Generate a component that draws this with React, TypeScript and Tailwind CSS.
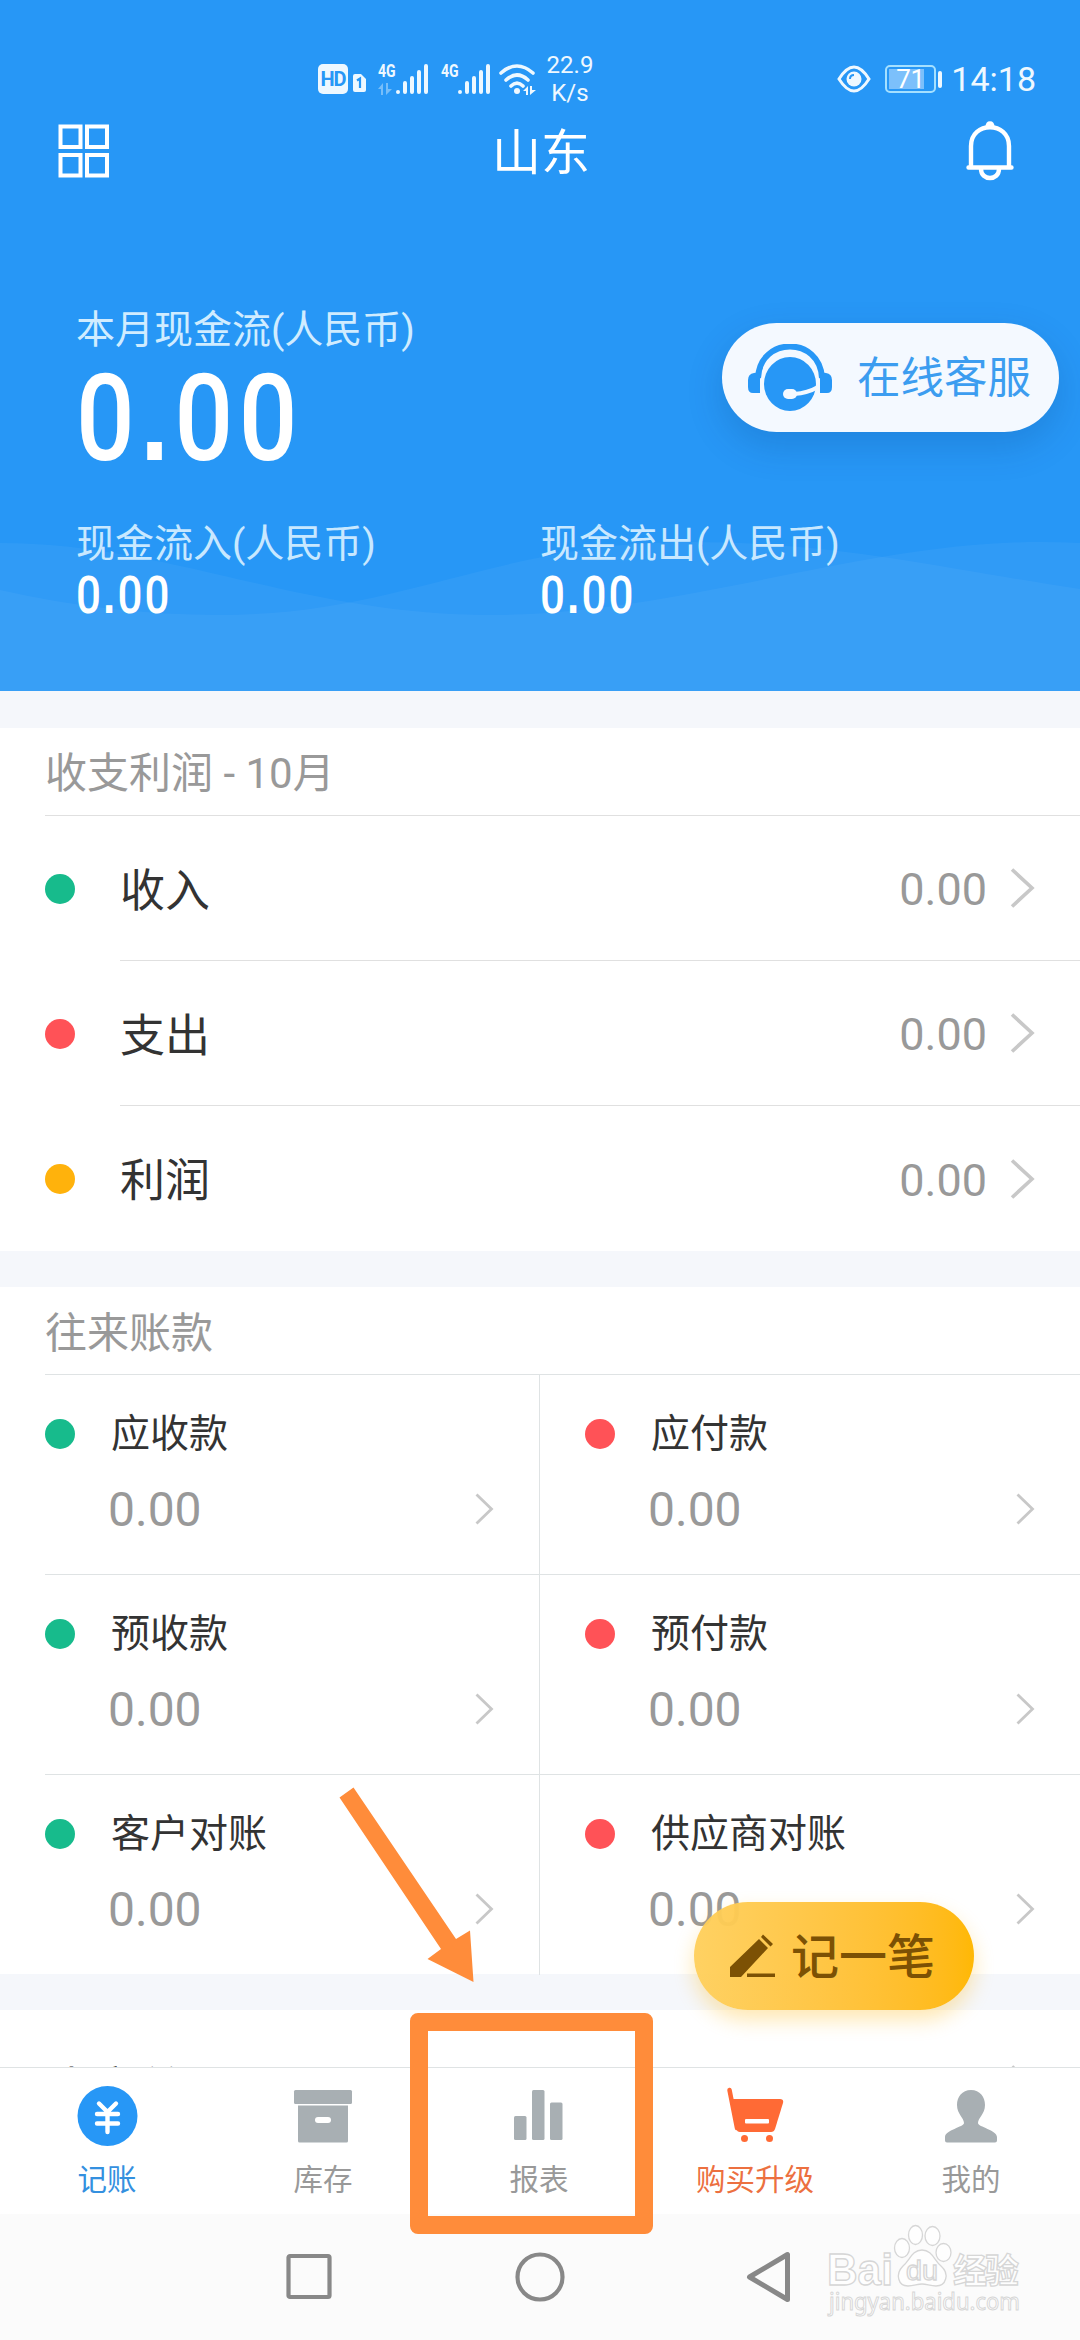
import React from 'react';

const summaryRows = [
  { label: '收入', value: '0.00', dot: 'bg-[#17bb8c]' },
  { label: '支出', value: '0.00', dot: 'bg-[#ff5257]' },
  { label: '利润', value: '0.00', dot: 'bg-[#ffb20c]' },
];

const accounts = [
  ['应收款', '应付款'],
  ['预收款', '预付款'],
  ['客户对账', '供应商对账'],
];

function Signal() {
  return (
    <svg className="w-[34px] h-[32px]" viewBox="0 0 34 32" stroke="#eef8ff" strokeWidth="4" strokeLinecap="round">
      <path d="M3 29V29.1M10 29V20M17 29V15M24 29V9M31 29V3" />
    </svg>
  );
}

function StatusBar() {
  return (
    <div className="mt-[50px] h-[58px] flex items-center pl-[318px] pr-[44px] text-[#eef8ff]">
      <div className="w-[30px] h-[30px] rounded-[5px] bg-[#eef8ff] text-[#2797f6] text-[20px] font-bold leading-[30px] text-center tracking-[-1px]">HD</div>
      <svg className="ml-[5px] mt-2 w-[13px] h-[18px]" viewBox="0 0 13 18">
        <path d="M0 2Q0 0 2 0H8L13 5V16Q13 18 11 18H2Q0 18 0 16Z" fill="#eef8ff" />
        <path d="M4 6.5L7 4.5V14" fill="none" stroke="#2797f6" strokeWidth="2.2" />
      </svg>
      <div className="ml-3 w-[17px] flex flex-col h-[32px]">
        <span className="text-[19px] leading-[16px] font-bold origin-left scale-x-[0.74]">4G</span>
        <svg className="mt-[4px] w-[15px] h-[12px] opacity-40" viewBox="0 0 15 12" fill="#eef8ff">
          <path d="M0 6L5 0V12H3V6ZM8 0V12L14 6H10V0Z" />
        </svg>
      </div>
      <Signal />
      <div className="ml-3 w-[16px] h-[32px]">
        <span className="block text-[19px] leading-[16px] font-bold origin-left scale-x-[0.74]">4G</span>
      </div>
      <Signal />
      <svg className="ml-[7px] w-[40px] h-[32px]" viewBox="0 0 40 32" fill="none" stroke="#eef8ff" strokeWidth="3.6" strokeLinecap="round">
        <path d="M3 10Q19 -4 35 10M8 17Q19 7 30 17M13 23Q19 17 25 23" />
        <circle cx="19" cy="28" r="3" fill="#eef8ff" stroke="none" />
        <path d="M25 28L30 23V32H28V28ZM32 23V32L38 27H34V23Z" fill="#eef8ff" stroke="none" />
      </svg>
      <div className="ml-[8px] w-[48px] flex flex-col items-center text-[24px] leading-[28px]">
        <span>22.9</span>
        <span>K/s</span>
      </div>
      <div className="ml-auto flex items-center">
        <svg className="w-[34px] h-[28px]" viewBox="0 0 34 28" fill="none">
          <path d="M2 14Q17 -10 32 14Q17 38 2 14Z" stroke="#eef8ff" strokeWidth="3" />
          <circle cx="17" cy="14" r="7.5" fill="#eef8ff" />
          <path d="M13 14Q13 10 17 10" stroke="#2797f6" strokeWidth="2" />
        </svg>
        <div className="ml-[14px] w-[51px] h-[28px] rounded-[5px] border-2 border-[#a5e0ff] p-[2px]">
          <div className="w-[35px] h-[20px] bg-[#7cc0fb] text-[26px] leading-[20px] text-white pl-[7px] whitespace-nowrap tracking-[-0.5px]">71</div>
        </div>
        <div className="ml-[2px] w-[4px] h-[17px] rounded bg-[#eef8ff]" />
        <span className="ml-[9px] text-[34px] leading-none">14:18</span>
      </div>
    </div>
  );
}

function TitleBar() {
  return (
    <div className="h-[86px] pl-[58px] pr-[66px] flex items-center text-white">
      <svg className="w-[52px] h-[54px]" viewBox="0 0 52 54" fill="none" stroke="#fff" strokeWidth="4">
        <rect x="2.5" y="2.5" width="20" height="20.5" />
        <rect x="29" y="2.5" width="20" height="20.5" />
        <rect x="2.5" y="31" width="20" height="20.5" />
        <rect x="29" y="31" width="20" height="20.5" />
      </svg>
      <h1 className="flex-1 pl-[6px] pt-[5px] text-center text-[49px] leading-none">山东</h1>
      <svg className="w-[48px] h-[60px]" viewBox="0 0 48 60" fill="none" stroke="#fff" strokeWidth="4.4" strokeLinecap="round">
        <path d="M5 45V25C5 0 43 0 43 25V45M2.5 46.5H45.5" />
        <path d="M15 48C15 60 33 60 33 48" />
        <path d="M20.5 6C20.5 -0.5 27.5 -0.5 27.5 6Z" fill="#fff" strokeWidth="2" />
      </svg>
    </div>
  );
}

// Condensed digits with a square decimal point
function Money({ className }: { className: string }) {
  return (
    <div className={`origin-left scale-x-[0.86] font-medium text-white whitespace-nowrap ${className}`}>
      0<span className="font-['Liberation_Sans'] font-bold">.</span>00
    </div>
  );
}

function Waves() {
  return (
    <svg className="absolute left-0 top-[530px] w-[1080px] h-[161px]" viewBox="0 530 1080 161" fill="#fff" fillOpacity="0.045">
      <path d="M0 543C170 543 300 615 490 615C680 615 860 542 1040 542Q1060 542 1080 543V691H0Z" />
      <path d="M0 590Q110 615 220 615C400 615 500 542 688 542C840 542 950 570 1080 589V691H0Z" />
    </svg>
  );
}

function Header() {
  return (
    <header className="relative h-[691px] shrink-0 flex flex-col bg-[#2797f6] overflow-hidden">
      <Waves />
      <StatusBar />
      <TitleBar />
      <div className="relative mt-[113px] pl-[76px]">
        <p className="text-[39px] leading-[46px] text-[#d0ecff]">本月现金流(人民币)</p>
        <Money className="text-[120px] leading-[130px] tracking-[6.5px]" />
        <div className="mt-[37px] flex">
          <div className="w-[464px]">
            <p className="text-[39px] leading-[46px] text-[#c8e8ff]">现金流入(人民币)</p>
            <Money className="mt-[3px] text-[51px] leading-[52px] tracking-[2.5px]" />
          </div>
          <div>
            <p className="text-[39px] leading-[46px] text-[#c8e8ff]">现金流出(人民币)</p>
            <Money className="mt-[3px] text-[51px] leading-[52px] tracking-[2.5px]" />
          </div>
        </div>
      </div>

      {/* Floating support button */}
      <button className="absolute left-[722px] top-[323px] w-[337px] h-[109px] rounded-full bg-[#f4f9ff] flex items-center pl-[26px] shadow-[0_14px_36px_rgba(0,50,110,0.18)]">
        <svg className="w-[84px] h-[68px]" viewBox="0 0 84 68">
          <path d="M10 34C12 -8 72 -8 74 34" fill="none" stroke="#2797f6" strokeWidth="6" />
          <path d="M12 28V49H5Q0 49 0 43V36Q0 30 6 29ZM72 28V49H79Q84 49 84 43V36Q84 30 78 29Z" fill="#2797f6" />
          <ellipse cx="42" cy="40" rx="26" ry="27" fill="#2797f6" />
          <path d="M70 43Q60 49 46 50" fill="none" stroke="#f4f9ff" strokeWidth="4" />
          <rect x="35" y="45" width="14" height="10" rx="5" fill="#f4f9ff" />
        </svg>
        <span className="ml-[25px] pt-[2px] text-[43.5px] leading-none text-[#3c9df0]">在线客服</span>
      </button>
    </header>
  );
}

function Chevron({ small = false }: { small?: boolean }) {
  return small ? (
    <svg className="w-[19px] h-[32px]" viewBox="0 0 19 32" fill="none" stroke="#c8c8c8" strokeWidth="2.8">
      <path d="M1.5 1.5L16.5 16L1.5 30.5" />
    </svg>
  ) : (
    <svg className="w-[25px] h-[40px]" viewBox="0 0 25 40" fill="none" stroke="#c8c8c8" strokeWidth="3.6">
      <path d="M2 1.5L22 20L2 38.5" />
    </svg>
  );
}

function AccountCell({ label, side }: { label: string; side: 'left' | 'right' }) {
  const isLeft = side === 'left';
  return (
    <div className={`h-[200px] pt-[34px] pr-[45px] ${isLeft ? 'w-[495px] border-r border-[#dfe3e4]' : 'flex-1 pl-[45px]'}`}>
      <div className="h-[50px] flex items-center">
        <i className={`w-[30px] h-[30px] rounded-full ${isLeft ? 'bg-[#17bb8c]' : 'bg-[#ff5257]'}`} />
        <span className="ml-[36px] pt-px text-[39px] leading-none text-[#333]">{label}</span>
      </div>
      <div className="mt-[25px] h-[50px] pl-[63px] flex items-center justify-between">
        <span className="pt-[2px] text-[48px] leading-none text-[#999]">0.00</span>
        <Chevron small />
      </div>
    </div>
  );
}

function Tab({ label, color, children }: { label: string; color: string; children: React.ReactNode }) {
  return (
    <div className="w-[216px] flex flex-col items-center">
      <svg className="mt-[16px] w-[64px] h-[64px]" viewBox="0 0 64 64">{children}</svg>
      <span className={`mt-[16px] mr-[2px] text-[29.5px] leading-[32px] ${color}`}>{label}</span>
    </div>
  );
}

function TabBar() {
  return (
    <nav className="h-[147px] shrink-0 flex bg-white border-t border-[#dfe3e4]">
      <Tab label="记账" color="text-[#3490df]">
        <circle cx="31.5" cy="32" r="30" fill="#2797f6" />
        <path d="M23 19.5L31.5 28L40 19.5M31.5 28V48M21 30H42M21 39.5H42" fill="none" stroke="#fff" strokeWidth="4.4" strokeLinecap="round" />
      </Tab>
      <Tab label="库存" color="text-[#999]">
        <rect x="2" y="6" width="58" height="14" rx="1.5" fill="#a8afb3" />
        <path d="M6 21.5H56V57Q56 58.5 54.5 58.5H7.5Q6 58.5 6 57Z" fill="#a8afb3" />
        <rect x="23" y="33" width="16" height="6" rx="3" fill="#fff" />
      </Tab>
      <Tab label="报表" color="text-[#999]">
        <g fill="#a8afb3">
          <rect x="6" y="32" width="12.5" height="24" rx="1.5" />
          <rect x="24" y="6" width="12.5" height="50" rx="1.5" />
          <rect x="42" y="18.5" width="12.5" height="37.5" rx="1.5" />
        </g>
      </Tab>
      <Tab label="购买升级" color="text-[#ec7040]">
        <path d="M5.5 6L13 44" stroke="#ff6a35" strokeWidth="4.5" strokeLinecap="round" />
        <path d="M8 15H56Q60 15 59 19L51 45Q50 48 47 48H16Q13 48 12.5 45Z" fill="#ff6a35" />
        <rect x="21" y="35" width="24" height="4.5" rx="1" fill="#fff" />
        <circle cx="20.5" cy="54.5" r="3.5" fill="#ff6a35" />
        <circle cx="45.5" cy="54.5" r="3.5" fill="#ff6a35" />
      </Tab>
      <Tab label="我的" color="text-[#999]">
        <path d="M31 6C40 6 45 13 45 21C45 30 38 34 38 39C38 43 57 46 57 53V56.5Q57 58.5 55 58.5H7Q5 58.5 5 56.5V53C5 46 24 43 24 39C24 34 17 30 17 21C17 13 22 6 31 6Z" fill="#a8afb3" />
      </Tab>
    </nav>
  );
}

function SystemNav() {
  return (
    <div className="h-[126px] shrink-0 bg-[#fbfbfb] flex items-center pl-[284px]">
      <svg className="w-[508px] h-[52px]" viewBox="0 0 508 52" fill="none" stroke="#888" strokeWidth="4.2" strokeLinejoin="round">
        <rect x="4.5" y="5" width="41" height="41" rx="1.5" />
        <circle cx="256" cy="26" r="22.5" />
        <path d="M465.5 26L503.5 3.5V48.5Z" strokeWidth="5" />
      </svg>
    </div>
  );
}

function Watermark() {
  return (
    <svg className="absolute left-[820px] top-[2216px] w-[210px] h-[106px]" viewBox="0 0 210 106" fill="#fefefe" stroke="#d6d6d6" strokeWidth="1.3">
      <text x="7" y="69" fontSize="44" fontWeight="bold" fontFamily="'Liberation Sans', sans-serif" textLength="66" lengthAdjust="spacingAndGlyphs">Bai</text>
      <ellipse cx="82" cy="32" rx="7.5" ry="9.5" />
      <ellipse cx="95.5" cy="19" rx="7" ry="9.5" />
      <ellipse cx="112.5" cy="20" rx="7.5" ry="9.5" />
      <ellipse cx="123.5" cy="36.5" rx="7.5" ry="9" />
      <path d="M102 34C112 34 114 44 121 50C130 58 126 70 116 70C110 70 107 68 102 68C97 68 94 70 88 70C78 70 75 58 83 50C90 44 92 34 102 34Z" />
      <text x="86" y="64" fontSize="27" fontFamily="'Liberation Sans', sans-serif" textLength="32" lengthAdjust="spacingAndGlyphs">du</text>
      <text x="133" y="67" fontSize="34" fontWeight="bold" fontFamily="'Noto Sans CJK SC', sans-serif" textLength="66">经验</text>
      <text x="9" y="94" fontSize="24" strokeWidth="1" fontFamily="'Noto Sans', sans-serif" textLength="191" lengthAdjust="spacingAndGlyphs">jingyan.baidu.com</text>
    </svg>
  );
}

export default function App() {
  return (
    <div className="relative w-[1080px] h-[2340px] flex flex-col overflow-hidden bg-white font-[Roboto,'Noto_Sans_CJK_SC',sans-serif]">
      <Header />

      <main className="flex-1 min-h-0 overflow-hidden flex flex-col gap-[36px] pt-[37px] bg-[#f5f7fb]">
        <section className="shrink-0 h-[523px] bg-white">
          <div className="ml-[45px] h-[88px] pt-[5px] border-b border-[#e0e0e0] flex items-center">
            <h2 className="text-[42px] leading-none text-[#999]">收支利润 - 10月</h2>
          </div>
          {summaryRows.map((row, i) => (
            <div key={row.label} className="flex items-center h-[145px] pl-[45px]">
              <i className={`w-[30px] h-[30px] rounded-full ${row.dot}`} />
              <div className={`ml-[45px] flex-1 h-full flex items-center pr-[45px] ${i < 2 ? 'border-b border-[#e0e0e0]' : ''}`}>
                <span className="pt-[6px] text-[45px] leading-none text-[#333]">{row.label}</span>
                <span className="ml-auto mr-[23px] pt-[3px] text-[45px] leading-none text-[#999]">{row.value}</span>
                <Chevron />
              </div>
            </div>
          ))}
        </section>

        <section className="shrink-0 h-[687px] bg-white pl-[45px]">
          <div className="h-[88px] pt-[6px] border-b border-[#dfe3e4] flex items-center">
            <h2 className="text-[42px] leading-none text-[#999]">往来账款</h2>
          </div>
          {accounts.map(([left, right], i) => (
            <div key={left} className={`flex h-[200px] ${i < 2 ? 'border-b border-[#dfe3e4]' : ''}`}>
              <AccountCell label={left} side="left" />
              <AccountCell label={right} side="right" />
            </div>
          ))}
        </section>

        <section className="shrink-0 h-[150px] bg-white flex items-center justify-between pl-[49px] pr-[45px]">
          <span className="pt-[9px] text-[45px] leading-none text-[#333]">未完单</span>
          <Chevron />
        </section>
      </main>

      <TabBar />
      <SystemNav />

      <button className="absolute left-[694px] top-[1902px] w-[280px] h-[108px] rounded-full bg-linear-to-r from-[#ffcf5a]/95 to-[#ffb804] flex items-center pl-[35px] text-[#7c5104] shadow-[0_10px_20px_rgba(255,185,20,0.32)]">
        <svg className="w-[47px] h-[44px]" viewBox="0 0 47 44" fill="#7c5104">
          <path d="M1 43V33L30 5L39 14L12 43ZM32 3L34 0.5L44 10L41.5 12.5Z" />
          <rect x="18" y="39.5" width="28" height="3.5" />
        </svg>
        <span className="ml-[15px] pt-[3px] text-[48px] leading-none font-medium">记一笔</span>
      </button>

      {/* Highlight box and arrow pointing at the reports tab */}
      <div className="absolute left-[410px] top-[2013px] w-[243px] h-[221px] rounded-[8px] border-[18px] border-[#ff8c3a]" />
      <svg className="absolute left-[330px] top-[1780px] w-[160px] h-[210px]" viewBox="330 1780 160 210" fill="#ff8c3a">
        <path d="M353.5 1787.5L456 1939L470 1930.5L473.5 1982L427.5 1959L441 1949L339.5 1797.5Z" />
      </svg>

      <Watermark />
    </div>
  );
}
